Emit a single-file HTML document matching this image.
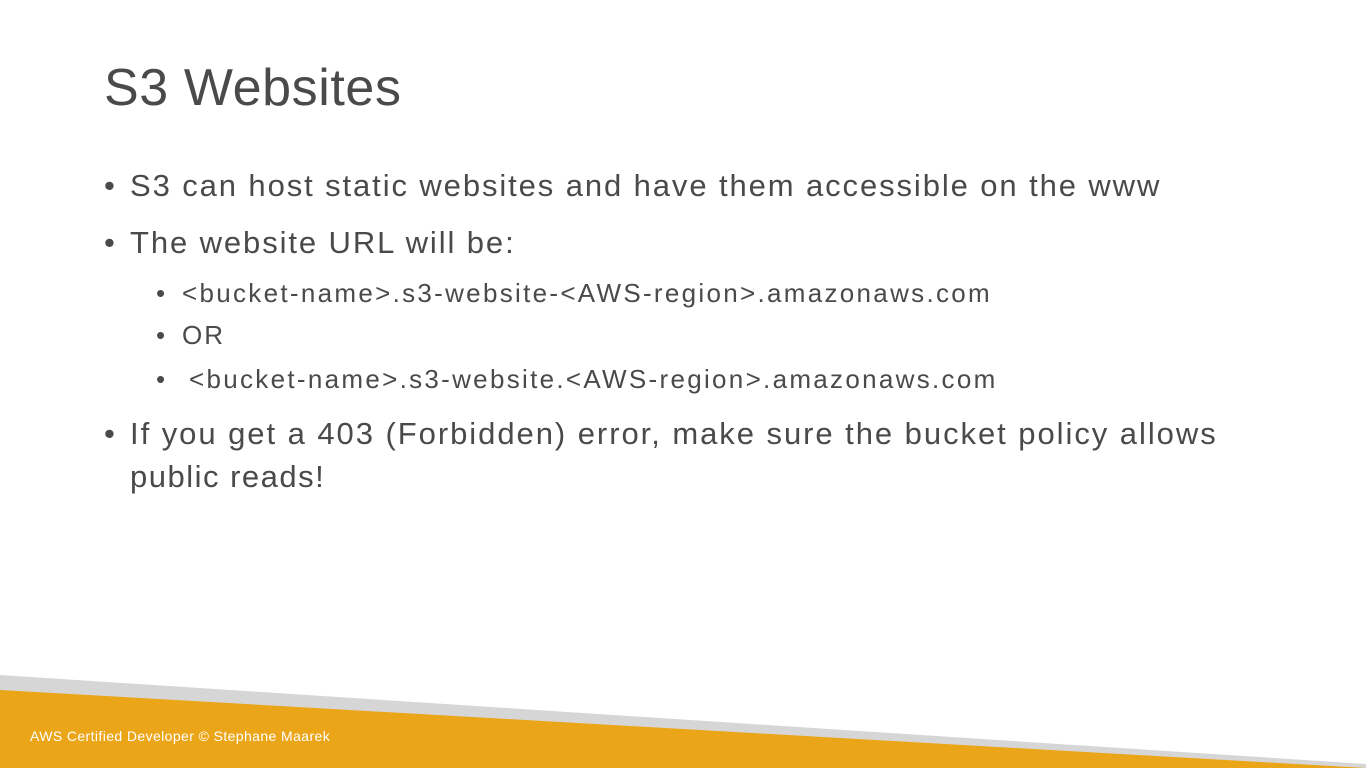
<!DOCTYPE html>
<html><head><style>
body{margin:0;width:1366px;height:768px;overflow:hidden;background:#fff;position:relative;font-family:"Liberation Sans",sans-serif;color:#4a4a4a}
.t{position:absolute;white-space:nowrap}
.b{position:absolute;white-space:nowrap}
</style></head><body>
<div class="t" style="left:104px;top:58px;font-size:52px;letter-spacing:0.6px">S3 Websites</div>
<div class="b" style="left:104px;top:168px;font-size:31px">•</div>
<div class="t" style="left:130px;top:168px;font-size:31px;letter-spacing:1.9px">S3 can host static websites and have them accessible on the www</div>
<div class="b" style="left:104px;top:225px;font-size:31px">•</div>
<div class="t" style="left:130px;top:225px;font-size:31px;letter-spacing:1.9px">The website URL will be:</div>
<div class="b" style="left:156px;top:278px;font-size:26px">•</div>
<div class="t" style="left:182px;top:278px;font-size:26px;letter-spacing:2.3px">&lt;bucket-name&gt;.s3-website-&lt;AWS-region&gt;.amazonaws.com</div>
<div class="b" style="left:156px;top:320px;font-size:26px">•</div>
<div class="t" style="left:182px;top:320px;font-size:26px;letter-spacing:2px">OR</div>
<div class="b" style="left:156px;top:364px;font-size:26px">•</div>
<div class="t" style="left:189px;top:364px;font-size:26px;letter-spacing:2.3px">&lt;bucket-name&gt;.s3-website.&lt;AWS-region&gt;.amazonaws.com</div>
<div class="b" style="left:104px;top:416px;font-size:31px">•</div>
<div class="t" style="left:130px;top:416px;font-size:31px;letter-spacing:1.95px">If you get a 403 (Forbidden) error, make sure the bucket policy allows</div>
<div class="t" style="left:130px;top:459px;font-size:31px;letter-spacing:1.5px">public reads!</div>
<svg style="position:absolute;left:0;top:0" width="1366" height="768">
<polygon points="0,675 1366,764 1366,768 0,768" fill="#d6d6d6"/>
<polygon points="0,690 1366,768 0,768" fill="#eba518"/>
</svg>
<div class="t" style="left:30px;top:728px;font-size:14px;color:#fff;letter-spacing:0.4px">AWS Certified Developer © Stephane Maarek</div>
<div class="t" style="left:1306px;top:744px;font-size:11px;color:#fff">Udemy</div>
</body></html>
